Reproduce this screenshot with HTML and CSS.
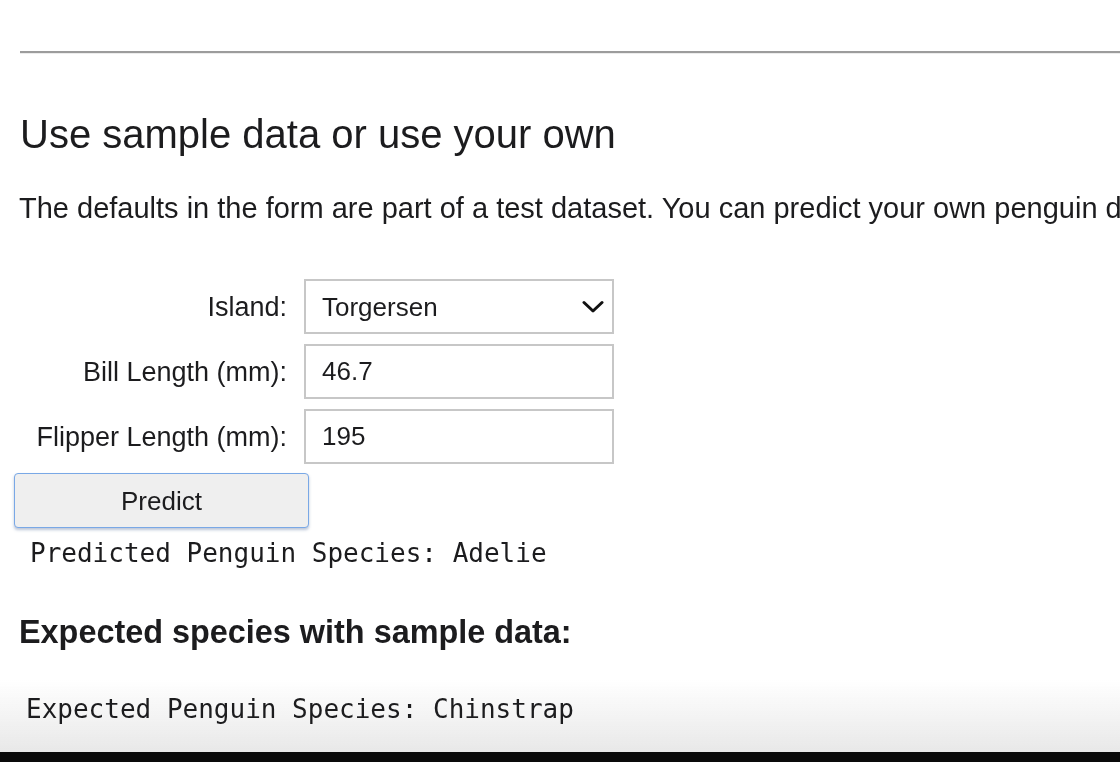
FILE: index.html
```html
<!DOCTYPE html>
<html lang="en">
<head>
<meta charset="utf-8">
<title>Penguin species</title>
<link rel="stylesheet" href="styles.css">
</head>
<body>
<main class="page">
  <hr class="rule">
  <h1 class="title">Use sample data or use your own</h1>
  <p class="intro">The defaults in the form are part of a test dataset. You can predict your own penguin data.</p>
  <form class="form">
    <div class="fields">
      <label class="label" for="island">Island:</label>
      <div class="select-wrap">
        <select id="island" class="control select">
          <option>Torgersen</option>
          <option>Biscoe</option>
          <option>Dream</option>
        </select>
        <svg class="chevron" viewBox="0 0 22 14" width="22" height="14" aria-hidden="true"><path d="M2 2.5 L11 11 L20 2.5" fill="none" stroke="#111" stroke-width="3" stroke-linecap="round" stroke-linejoin="round"/></svg>
      </div>
      <label class="label" for="bill">Bill Length (mm):</label>
      <input id="bill" class="control" type="text" value="46.7">
      <label class="label" for="flipper">Flipper Length (mm):</label>
      <input id="flipper" class="control" type="text" value="195">
    </div>
    <button type="button" class="predict">Predict</button>
  </form>
  <pre class="result result-predicted">Predicted Penguin Species: Adelie</pre>
  <h2 class="subtitle">Expected species with sample data:</h2>
  <pre class="result result-expected">Expected Penguin Species: Chinstrap</pre>
</main>
<div class="dock-shadow"></div>
</body>
</html>
```

FILE: styles.css
```css
html {
  background: #ffffff;
}

html, body {
  margin: 0;
  padding: 0;
  overflow: hidden;
}

body {
  font-family: "Liberation Sans", Arial, sans-serif;
  color: #1d1d1f;
  height: 762px;
}

.page {
  position: relative;
  z-index: 1;
  padding: 51px 0 0 0;
}

.rule {
  margin: 0 0 0 20px;
  height: 2px;
  border: 0;
  background: #9c9c9c;
  border-bottom: 1px solid #ececec;
}

.title {
  margin: 56px 0 0 20px;
  font-size: 40px;
  line-height: 48px;
  font-weight: 400;
  color: #1c1c1e;
}

.intro {
  margin: 32px 0 0 19px;
  font-size: 29px;
  line-height: 36px;
  white-space: nowrap;
  color: #1c1c1e;
}

.form {
  margin: 53px 0 0 14px;
}

.fields {
  display: grid;
  grid-template-columns: 273px 310px;
  column-gap: 17px;
  row-gap: 10px;
  align-items: center;
}

.label {
  text-align: right;
  font-size: 27px;
  line-height: 32px;
  color: #1c1c1e;
}

.control {
  box-sizing: border-box;
  width: 310px;
  height: 55px;
  margin: 0;
  border: 2px solid #c7c7c7;
  border-radius: 0;
  background: #fff;
  padding: 0 16px;
  font-family: "Liberation Sans", Arial, sans-serif;
  font-size: 26px;
  color: #1c1c1e;
  outline: none;
}

.select-wrap {
  position: relative;
  width: 310px;
  height: 55px;
}

.select {
  appearance: none;
  -webkit-appearance: none;
}

.chevron {
  position: absolute;
  right: 10px;
  top: 21px;
  pointer-events: none;
}

.predict {
  box-sizing: border-box;
  display: block;
  margin-top: 9px;
  width: 295px;
  height: 55px;
  background: #efefef;
  border: 1px solid #79a8e6;
  border-radius: 4px;
  box-shadow: 0 2px 3px rgba(60, 90, 140, 0.35);
  font-family: "Liberation Sans", Arial, sans-serif;
  font-size: 26px;
  color: #1c1c1e;
  padding: 1px 0 0 0;
}

.result {
  margin: 0;
  font-family: "DejaVu Sans Mono", "Liberation Mono", monospace;
  font-size: 26px;
  line-height: 32px;
  color: #1c1c1e;
}

.result-predicted {
  margin: 9px 0 0 30px;
}

.subtitle {
  margin: 43px 0 0 19px;
  font-size: 32.4px;
  line-height: 40px;
  font-weight: 700;
  color: #1c1c1e;
}

.result-expected {
  margin: 41px 0 0 26px;
}

.dock-shadow {
  position: fixed;
  z-index: 0;
  left: 0;
  right: 0;
  bottom: 0;
  height: 82px;
  background:
    linear-gradient(to bottom, #0a0a0a 0, #0a0a0a 100%) bottom / 100% 10px no-repeat,
    linear-gradient(to bottom, rgba(255,255,255,0) 0, rgba(232,232,232,1) 72px) top / 100% 72px no-repeat;
  pointer-events: none;
}
```
